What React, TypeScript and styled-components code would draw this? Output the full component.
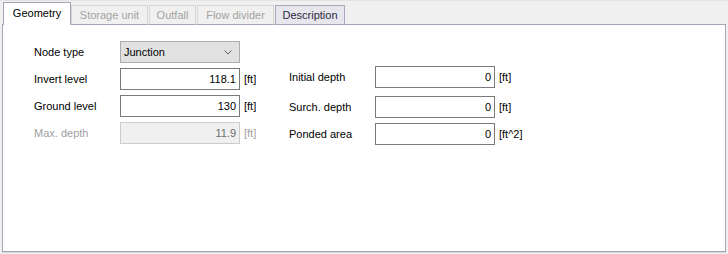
import React from "react";
import styled, { createGlobalStyle } from "styled-components";

const Global = createGlobalStyle`
  html, body { margin: 0; padding: 0; background: #f0f0f0; }
  body { font-family: "Liberation Sans", Arial, sans-serif; font-size: 11px; color: #000; }
`;

const Window = styled.div`
  width: 728px;
  height: 254px;
  box-sizing: border-box;
  padding: 2px 2px 0 2px;
  display: flex;
  flex-direction: column;
  background: #f0f0f0;
  border-top: 1px solid #e4e4e4;
`;

const TabStrip = styled.div`
  display: flex;
  align-items: flex-end;
  height: 22px;
  padding-left: 1px;
  position: relative;
  z-index: 1;
  margin-bottom: -1px;
`;

const Tab = styled.div<{ $active?: boolean; $disabled?: boolean; $width: number }>`
  box-sizing: border-box;
  width: ${(p) => p.$width}px;
  height: ${(p) => (p.$active ? 23 : 20)}px;
  display: flex;
  align-items: center;
  justify-content: center;
  padding-bottom: ${(p) => (p.$active ? 2 : 0)}px;
  background: ${(p) => (p.$active ? "#ffffff" : p.$disabled ? "#f0f0f0" : "#e6e6ec")};
  border: 1px solid ${(p) => (p.$active ? "#a4a4b4" : p.$disabled ? "#d6d6d6" : "#a8a8b8")};
  border-bottom: ${(p) => (p.$active ? "none" : "1px solid #a4a4b4")};
  margin-right: ${(p) => (p.$active ? 0 : 1)}px;
  color: ${(p) => (p.$active ? "#000" : p.$disabled ? "#a3a3a3" : "#2a2a40")};
  white-space: nowrap;
`;

const Panel = styled.div`
  flex: 1;
  box-sizing: border-box;
  background: #fff;
  border: 1px solid #a4a4b4;
  box-shadow: 0 1px 0 #d8d8d8;
  margin-bottom: 2px;
  display: flex;
  padding: 16px 0 0 31px;
`;

const Column = styled.div<{ $rows: string; $left: number }>`
  display: grid;
  grid-template-columns: 82px 120px 30px;
  grid-template-rows: ${(p) => p.$rows};
  column-gap: 4px;
  align-items: start;
  align-content: start;
  margin-left: ${(p) => p.$left}px;
`;

const Label = styled.span<{ $disabled?: boolean }>`
  line-height: 22px;
  color: ${(p) => (p.$disabled ? "#a0a0a0" : "#000")};
  white-space: nowrap;
`;

const Field = styled.div<{ $disabled?: boolean }>`
  box-sizing: border-box;
  height: 22px;
  border: 1px solid ${(p) => (p.$disabled ? "#cccccc" : "#7a7a7a")};
  background: ${(p) => (p.$disabled ? "#f0f0f0" : "#fff")};
  color: ${(p) => (p.$disabled ? "#6d6d6d" : "#000")};
  display: flex;
  align-items: center;
  justify-content: flex-end;
  padding-right: 3px;
`;

const Combo = styled.div`
  box-sizing: border-box;
  height: 22px;
  border: 1px solid #adadad;
  background: #e1e1e1;
  display: flex;
  align-items: center;
  justify-content: space-between;
  padding: 0 7px 0 3px;
`;

const Unit = styled.span<{ $disabled?: boolean }>`
  line-height: 22px;
  color: ${(p) => (p.$disabled ? "#a0a0a0" : "#000")};
  white-space: nowrap;
`;

const Spacer = styled.span``;

const Chevron = () => (
  <svg width="8" height="5" viewBox="0 0 8 5">
    <path d="M0.5 0.5 L4 4 L7.5 0.5" fill="none" stroke="#606060" strokeWidth="1" />
  </svg>
);

export default function App() {
  return (
    <>
      <Global />
      <Window>
        <TabStrip>
          <Tab $active $width={68}>Geometry</Tab>
          <Tab $disabled $width={77}>Storage unit</Tab>
          <Tab $disabled $width={47}>Outfall</Tab>
          <Tab $disabled $width={77}>Flow divider</Tab>
          <Tab $width={70}>Description</Tab>
        </TabStrip>
        <Panel>
          <Column $rows="27px 27px 27px 22px" $left={0}>
            <Label>Node type</Label>
            <Combo>
              <span>Junction</span>
              <Chevron />
            </Combo>
            <Spacer />
            <Label>Invert level</Label>
            <Field>118.1</Field>
            <Unit>[ft]</Unit>
            <Label>Ground level</Label>
            <Field>130</Field>
            <Unit>[ft]</Unit>
            <Label $disabled>Max. depth</Label>
            <Field $disabled>11.9</Field>
            <Unit $disabled>[ft]</Unit>
          </Column>
          <Column $rows="25px 30px 27px 22px" $left={15}>
            <Spacer />
            <Spacer />
            <Spacer />
            <Label>Initial depth</Label>
            <Field>0</Field>
            <Unit>[ft]</Unit>
            <Label>Surch. depth</Label>
            <Field>0</Field>
            <Unit>[ft]</Unit>
            <Label>Ponded area</Label>
            <Field>0</Field>
            <Unit>[ft^2]</Unit>
          </Column>
        </Panel>
      </Window>
    </>
  );
}
